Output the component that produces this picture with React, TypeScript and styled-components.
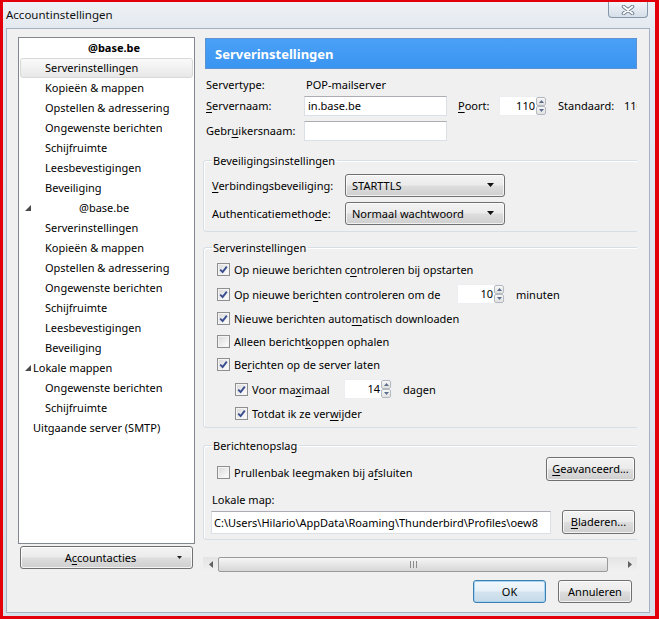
import React from 'react';
import styled, { createGlobalStyle } from 'styled-components';

const GlobalStyle = createGlobalStyle`
  html, body {
    margin: 0;
    padding: 0;
  }
  body {
    font-family: "Noto Sans", "Open Sans", sans-serif;
    font-size: 11px;
    color: #000;
  }
  * {
    box-sizing: border-box;
  }
`;

const Screen = styled.div`
  width: 659px;
  height: 619px;
  padding: 2px 4px 3px 3px;
  background: #e3000b;
`;

const Frame = styled.div`
  height: 100%;
  display: flex;
  flex-direction: column;
  background: linear-gradient(180deg, #eef2f6 0%, #e2e8ef 30px, #d8e0ea 100%);
`;

const TitleBar = styled.div`
  height: 26px;
  flex-shrink: 0;
  display: flex;
  align-items: flex-start;
`;

const Caption = styled.span`
  padding: 5px 0 0 3px;
  line-height: 16px;
  font-size: 11.5px;
  color: #111;
`;

const CloseButton = styled.div`
  margin-left: auto;
  margin-right: 7px;
  width: 40px;
  height: 16px;
  border: 1px solid #8797ab;
  border-top: none;
  border-radius: 0 0 4px 4px;
  background: linear-gradient(180deg, #f3f6f9 0%, #e3e9f0 55%, #d6dee8 100%);
  display: flex;
  align-items: center;
  justify-content: center;
`;

const Client = styled.div`
  flex: 1;
  margin: 0 5px 3px 3px;
  border: 1px solid #a3b1c2;
  background: #f0f0f0;
  display: flex;
  flex-direction: column;
  padding: 8px 0 0 11px;
`;

const Main = styled.div`
  display: flex;
  gap: 8px;
  height: 535px;
`;

const LeftCol = styled.div`
  width: 177px;
  display: flex;
  flex-direction: column;
`;

const Tree = styled.div`
  height: 507px;
  border: 1px solid #828790;
  background: #fff;
  padding: 0 1px;
`;

const TreeRow = styled.div<{ $indent: number; $bold?: boolean; $selected?: boolean }>`
  height: 20px;
  line-height: 18px;
  display: flex;
  align-items: center;
  padding-left: ${({ $indent }) => $indent}px;
  font-weight: ${({ $bold }) => ($bold ? 700 : 400)};
  border: 1px solid ${({ $selected }) => ($selected ? '#d9d9d9' : 'transparent')};
  border-radius: 3px;
  background: ${({ $selected }) =>
    $selected ? 'linear-gradient(180deg, #fafafa 0%, #e8e8e8 100%)' : 'transparent'};
  white-space: nowrap;
`;

const TreeText = styled.span<{ $gap: number }>`
  margin-left: ${({ $gap }) => $gap}px;
`;

const Twisty = styled.svg`
  flex-shrink: 0;
`;

const WinButton = styled.div<{ $width?: number; $default?: boolean; $gap?: number }>`
  width: ${({ $width }) => ($width ? `${$width}px` : 'auto')};
  height: 23px;
  flex-shrink: 0;
  margin-left: ${({ $gap }) => $gap || 0}px;
  border: 1px solid ${({ $default }) => ($default ? '#3c7fb1' : '#707070')};
  border-radius: 3px;
  background: ${({ $default }) =>
    $default
      ? 'linear-gradient(180deg, #f2f8fc 0%, #e6f0f7 48%, #d4e4ef 52%, #c5d9e8 100%)'
      : 'linear-gradient(180deg, #f3f3f3 0%, #ebebeb 48%, #dddddd 52%, #cfcfcf 100%)'};
  box-shadow: inset 0 0 0 1px ${({ $default }) => ($default ? '#a6d3f0' : 'rgba(255,255,255,0.75)')};
  display: flex;
  align-items: center;
  justify-content: center;
  line-height: 16px;
  white-space: nowrap;
`;

const AccountButton = styled(WinButton)`
  margin: 2px 2px 0;
  justify-content: flex-start;
  padding-left: 9px;
`;

const ButtonText = styled.span`
  flex: 1;
  text-align: center;
`;

const ButtonArrow = styled.span`
  width: 16px;
  margin-right: 5px;
  display: flex;
  justify-content: center;
`;

const RightCol = styled.div`
  width: 434px;
  display: flex;
  flex-direction: column;
`;

const Viewport = styled.div`
  height: 520px;
  overflow: hidden;
`;

const Content = styled.div`
  width: 440px;
`;

const PaneHeader = styled.div`
  margin: 1px 0 0 2px;
  width: 432px;
  height: 31px;
  border: 1px solid #5d93d2;
  background: linear-gradient(180deg, #4aa0f6 0%, #3a95f1 100%);
  color: #fff;
  font-weight: 700;
  font-size: 13px;
  padding-left: 9px;
  display: flex;
  align-items: center;
`;

const FieldRow = styled.div<{ $top: number; $h: number }>`
  margin-top: ${({ $top }) => $top}px;
  height: ${({ $h }) => $h}px;
  display: flex;
  align-items: center;
  padding-left: 3px;
  white-space: nowrap;
`;

const Label = styled.span<{ $w?: number; $gap?: number }>`
  width: ${({ $w }) => ($w ? `${$w}px` : 'auto')};
  margin-left: ${({ $gap }) => $gap || 0}px;
  flex-shrink: 0;
  white-space: nowrap;
`;

const Value = styled.span`
  padding-left: 2px;
`;

const TextBox = styled.div<{ $w?: number }>`
  width: ${({ $w }) => ($w ? `${$w}px` : 'auto')};
  height: 20px;
  flex-shrink: 0;
  background: #fff;
  border: 1px solid #dbdfe6;
  border-top-color: #abadb3;
  padding: 0 3px;
  line-height: 18px;
  overflow: hidden;
  white-space: nowrap;
`;

const PathBox = styled(TextBox)`
  flex: 1 1 0;
  min-width: 0;
  height: 23px;
  line-height: 21px;
  margin-left: -1px;
  padding: 0 2px;
`;

const SpinBox = styled.div<{ $gap?: number }>`
  width: 48px;
  height: 20px;
  flex-shrink: 0;
  margin-left: ${({ $gap }) => $gap || 0}px;
  display: flex;
  background: #fff;
  border: 1px solid #eceef2;
`;

const SpinValue = styled.span`
  flex: 1;
  text-align: right;
  padding-right: 1px;
  line-height: 18px;
`;

const SpinArrows = styled.div`
  width: 10px;
  display: flex;
  flex-direction: column;
`;

const SpinArrow = styled.div`
  flex: 1;
  border: 1px solid #b4b8bf;
  border-radius: 2px;
  background: linear-gradient(180deg, #f7f7f7 0%, #e1e1e1 100%);
  display: flex;
  align-items: center;
  justify-content: center;
`;

const Group = styled.fieldset<{ $top: number; $pad: string }>`
  margin: ${({ $top }) => $top}px 0 0 0;
  min-width: 0;
  border: 1px solid #d5dfe5;
  border-radius: 3px;
  padding: ${({ $pad }) => $pad};
  box-shadow: inset 1px 1px 0 #fff;
`;

const Legend = styled.legend`
  padding: 0 2px 0 1px;
  line-height: 15px;
  font-size: 11px;
`;

const GroupStack = styled.div<{ $gap?: number }>`
  display: flex;
  flex-direction: column;
  gap: ${({ $gap }) => $gap || 0}px;
`;

const GroupRow = styled.div<{ $h: number; $top?: number }>`
  height: ${({ $h }) => $h}px;
  margin-top: ${({ $top }) => $top || 0}px;
  display: flex;
  align-items: center;
  white-space: nowrap;
`;

const DropDown = styled.div`
  width: 160px;
  height: 23px;
  border: 1px solid #707070;
  border-radius: 3px;
  background: linear-gradient(180deg, #f3f3f3 0%, #ebebeb 48%, #dddddd 52%, #cfcfcf 100%);
  box-shadow: inset 0 0 0 1px rgba(255, 255, 255, 0.7);
  display: flex;
  align-items: center;
  padding-left: 6px;
  padding-right: 10px;
  justify-content: space-between;
`;

const Check = styled.label<{ $indent: number; $w?: number; $shift?: number }>`
  display: flex;
  align-items: center;
  gap: 4px;
  margin-left: ${({ $indent }) => $indent}px;
  margin-top: ${({ $shift }) => $shift || 0}px;
  width: ${({ $w }) => ($w ? `${$w}px` : 'auto')};
  flex-shrink: 0;
  white-space: nowrap;
`;

const Box = styled.span`
  width: 13px;
  height: 13px;
  flex-shrink: 0;
  border: 1px solid #8e8f8f;
  background: linear-gradient(135deg, #d8d8d8 0%, #f4f4f4 70%, #ffffff 100%);
  box-shadow: inset 0 0 0 1px #f4f4f4;
  display: flex;
  align-items: center;
  justify-content: center;
`;

const RightButton = styled(WinButton)`
  margin-left: auto;
  height: 24px;
`;

const ScrollBar = styled.div`
  height: 15px;
  display: flex;
  align-items: stretch;
  background: linear-gradient(180deg, #e4e4e4 0%, #f1f1f1 100%);
`;

const ScrollArrow = styled.div`
  width: 15px;
  display: flex;
  align-items: center;
  justify-content: center;
`;

const Thumb = styled.div`
  width: 390px;
  border: 1px solid #9a9a9a;
  border-radius: 2px;
  background: linear-gradient(180deg, #f6f6f6 0%, #e6e6e6 50%, #d6d6d6 100%);
  display: flex;
  align-items: center;
  justify-content: center;
`;

const Track = styled.div`
  flex: 1;
`;

const Footer = styled.div`
  margin-top: 8px;
  padding-right: 17px;
  display: flex;
  justify-content: flex-end;
  gap: 12px;
`;

const Key = styled.u`
  text-decoration-thickness: 1px;
  text-underline-offset: 2px;
`;

const CheckMark = () => (
  <svg width="9" height="9" viewBox="0 0 9 9">
    <path d="M1.2 4.6 L3.6 7 L7.8 1.6" fill="none" stroke="#3a4e8f" strokeWidth="1.9" />
  </svg>
);

const CheckBox = ({
  checked,
  indent,
  w,
  shift,
  children,
}: {
  checked?: boolean;
  indent: number;
  w?: number;
  shift?: number;
  children: React.ReactNode;
}) => (
  <Check $indent={indent} $w={w} $shift={shift}>
    <Box>{checked && <CheckMark />}</Box>
    <span>{children}</span>
  </Check>
);

const Spinner = ({ value, gap }: { value: string; gap?: number }) => (
  <SpinBox $gap={gap}>
    <SpinValue>{value}</SpinValue>
    <SpinArrows>
      <SpinArrow>
        <svg width="5" height="3" viewBox="0 0 5 3">
          <path d="M0 3 L2.5 0 L5 3 Z" fill="#5b6f8c" />
        </svg>
      </SpinArrow>
      <SpinArrow>
        <svg width="5" height="3" viewBox="0 0 5 3">
          <path d="M0 0 L2.5 3 L5 0 Z" fill="#5b6f8c" />
        </svg>
      </SpinArrow>
    </SpinArrows>
  </SpinBox>
);

const DownTriangle = () => (
  <svg width="7" height="4" viewBox="0 0 7 4">
    <path d="M0 0 L7 0 L3.5 4 Z" fill="#111" />
  </svg>
);

const Expanded = () => (
  <Twisty width="6" height="6" viewBox="0 0 6 6">
    <path d="M6 0 L6 6 L0 6 Z" fill="#4a4a4a" />
  </Twisty>
);

const accountItems = [
  'Serverinstellingen',
  'Kopieën & mappen',
  'Opstellen & adressering',
  'Ongewenste berichten',
  'Schijfruimte',
  'Leesbevestigingen',
  'Beveiliging',
];

export default function App() {
  return (
    <>
      <GlobalStyle />
      <Screen>
        <Frame>
          <TitleBar>
            <Caption>Accountinstellingen</Caption>
            <CloseButton>
              <svg width="14" height="10" viewBox="0 0 14 10">
                <path d="M2.5 1.5 L11.5 8.5 M11.5 1.5 L2.5 8.5" stroke="#6e7d90" strokeWidth="3.6" strokeLinecap="round" />
                <path d="M2.5 1.5 L11.5 8.5 M11.5 1.5 L2.5 8.5" stroke="#ffffff" strokeWidth="1.8" strokeLinecap="round" />
              </svg>
            </CloseButton>
          </TitleBar>

          <Client>
            <Main>
              <LeftCol>
                <Tree>
                  <TreeRow $indent={67} $bold>@base.be</TreeRow>
                  {accountItems.map((item, i) => (
                    <TreeRow key={`a${i}`} $indent={24} $selected={i === 0}>
                      {item}
                    </TreeRow>
                  ))}
                  <TreeRow $indent={4}>
                    <Expanded />
                    <TreeText $gap={48}>@base.be</TreeText>
                  </TreeRow>
                  {accountItems.map((item, i) => (
                    <TreeRow key={`b${i}`} $indent={24}>
                      {item}
                    </TreeRow>
                  ))}
                  <TreeRow $indent={4}>
                    <Expanded />
                    <TreeText $gap={2}>Lokale mappen</TreeText>
                  </TreeRow>
                  <TreeRow $indent={24}>Ongewenste berichten</TreeRow>
                  <TreeRow $indent={24}>Schijfruimte</TreeRow>
                  <TreeRow $indent={12}>Uitgaande server (SMTP)</TreeRow>
                </Tree>
                <AccountButton>
                  <ButtonText>
                    A<Key>c</Key>countacties
                  </ButtonText>
                  <ButtonArrow>
                    <svg width="5" height="3" viewBox="0 0 5 3">
                      <path d="M0 0 L5 0 L2.5 3 Z" fill="#222" />
                    </svg>
                  </ButtonArrow>
                </AccountButton>
              </LeftCol>

              <RightCol>
                <Viewport>
                  <Content>
                    <PaneHeader>Serverinstellingen</PaneHeader>

                    <FieldRow $top={5} $h={20}>
                      <Label $w={98}>Servertype:</Label>
                      <Value>POP-mailserver</Value>
                    </FieldRow>
                    <FieldRow $top={1} $h={21}>
                      <Label $w={98}>
                        <Key>S</Key>ervernaam:
                      </Label>
                      <TextBox $w={143}>in.base.be</TextBox>
                      <Label $w={41} $gap={11}>
                        <Key>P</Key>oort:
                      </Label>
                      <Spinner value="110" />
                      <Label $w={66} $gap={11}>Standaard:</Label>
                      <span>110</span>
                    </FieldRow>
                    <FieldRow $top={4} $h={21}>
                      <Label $w={98}>
                        Gebr<Key>u</Key>ikersnaam:
                      </Label>
                      <TextBox $w={143} />
                    </FieldRow>

                    <Group $top={12} $pad="5px 7px 6px 8px">
                      <Legend>Beveiligingsinstellingen</Legend>
                      <GroupStack $gap={4}>
                        <GroupRow $h={24}>
                          <Label $w={133}>
                            <Key>V</Key>erbindingsbeveiliging:
                          </Label>
                          <DropDown>
                            <span>STARTTLS</span>
                            <DownTriangle />
                          </DropDown>
                        </GroupRow>
                        <GroupRow $h={24}>
                          <Label $w={133}>
                            Authenticatiemetho<Key>d</Key>e:
                          </Label>
                          <DropDown>
                            <span>Normaal wachtwoord</span>
                            <DownTriangle />
                          </DropDown>
                        </GroupRow>
                      </GroupStack>
                    </Group>

                    <Group $top={8} $pad="2px 7px 2px 8px">
                      <Legend>Serverinstellingen</Legend>
                      <GroupStack>
                        <GroupRow $h={24}>
                          <CheckBox checked indent={5}>
                            Op nieuwe berichten c<Key>o</Key>ntroleren bij opstarten
                          </CheckBox>
                        </GroupRow>
                        <GroupRow $h={26}>
                          <CheckBox checked indent={5} w={240}>
                            Op nieuwe beri<Key>c</Key>hten controleren om de
                          </CheckBox>
                          <Spinner value="10" />
                          <Label $gap={11}>minuten</Label>
                        </GroupRow>
                        <GroupRow $h={23}>
                          <CheckBox checked indent={5}>
                            Nieuwe berichten auto<Key>m</Key>atisch downloaden
                          </CheckBox>
                        </GroupRow>
                        <GroupRow $h={23}>
                          <CheckBox indent={5}>
                            Alleen bericht<Key>k</Key>oppen ophalen
                          </CheckBox>
                        </GroupRow>
                        <GroupRow $h={23}>
                          <CheckBox checked indent={5}>
                            Be<Key>r</Key>ichten op de server laten
                          </CheckBox>
                        </GroupRow>
                        <GroupRow $h={26}>
                          <CheckBox checked indent={23} w={109}>
                            Voor ma<Key>x</Key>imaal
                          </CheckBox>
                          <Spinner value="14" />
                          <Label $gap={11}>dagen</Label>
                        </GroupRow>
                        <GroupRow $h={23}>
                          <CheckBox checked indent={23}>
                            Totdat ik ze ver<Key>w</Key>ijder
                          </CheckBox>
                        </GroupRow>
                      </GroupStack>
                    </Group>

                    <Group $top={10} $pad="3px 7px 5px 8px">
                      <Legend>Berichtenopslag</Legend>
                      <GroupRow $h={26}>
                        <CheckBox indent={5} shift={6}>
                          Prullenbak leegmaken bij a<Key>f</Key>sluiten
                        </CheckBox>
                        <RightButton $width={89}>
                          <span>
                            <Key>G</Key>eavanceerd...
                          </span>
                        </RightButton>
                      </GroupRow>
                      <GroupRow $h={18} $top={8}>
                        <span>Lokale map:</span>
                      </GroupRow>
                      <GroupRow $h={24} $top={2}>
                        <PathBox>C:\Users\Hilario\AppData\Roaming\Thunderbird\Profiles\oew8</PathBox>
                        <WinButton $width={73} $gap={11} style={{ height: 24 }}>
                          <span>
                            <Key>B</Key>laderen...
                          </span>
                        </WinButton>
                      </GroupRow>
                    </Group>
                  </Content>
                </Viewport>

                <ScrollBar>
                  <ScrollArrow>
                    <svg width="4" height="7" viewBox="0 0 4 7">
                      <path d="M4 0 L0 3.5 L4 7 Z" fill="#606060" />
                    </svg>
                  </ScrollArrow>
                  <Thumb>
                    <svg width="9" height="7" viewBox="0 0 9 7">
                      <path d="M1.5 0 V7 M4.5 0 V7 M7.5 0 V7" stroke="#8a8a8a" strokeWidth="1" />
                    </svg>
                  </Thumb>
                  <Track />
                  <ScrollArrow>
                    <svg width="4" height="7" viewBox="0 0 4 7">
                      <path d="M0 0 L4 3.5 L0 7 Z" fill="#606060" />
                    </svg>
                  </ScrollArrow>
                </ScrollBar>
              </RightCol>
            </Main>

            <Footer>
              <WinButton $width={73} $default>
                OK
              </WinButton>
              <WinButton $width={74}>Annuleren</WinButton>
            </Footer>
          </Client>
        </Frame>
      </Screen>
    </>
  );
}
